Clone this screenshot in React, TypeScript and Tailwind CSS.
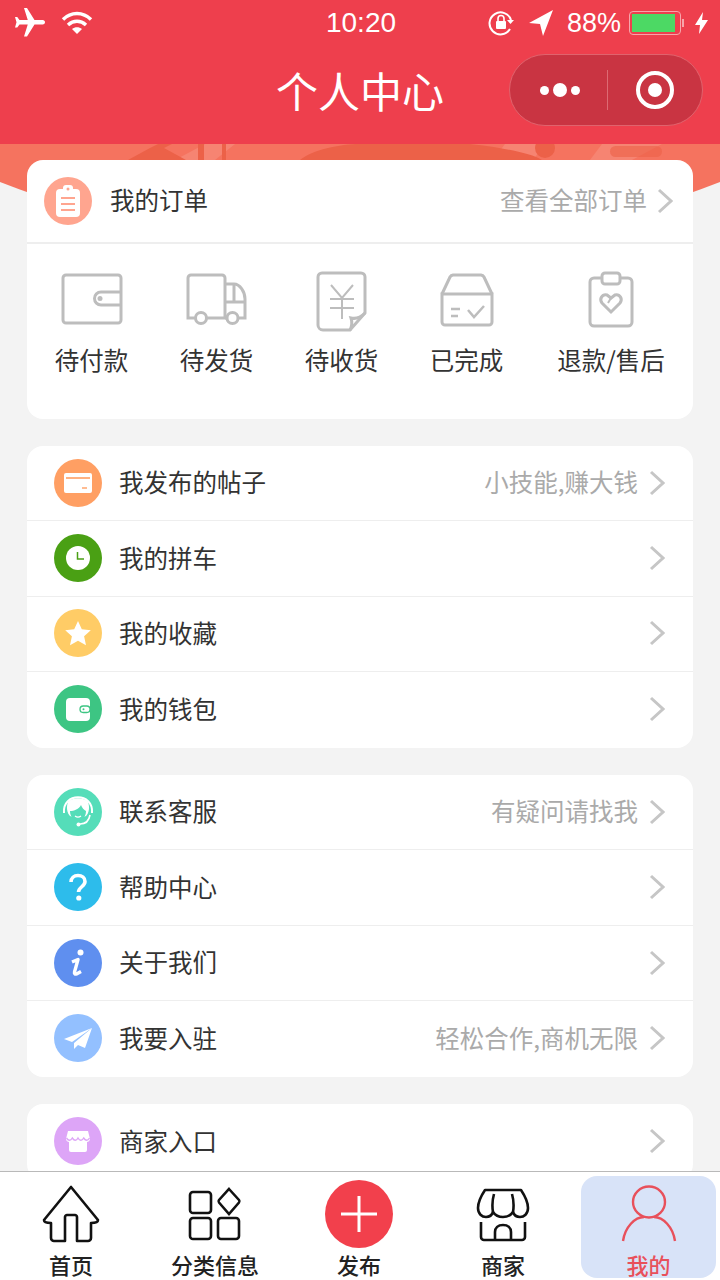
import type { ReactNode } from 'react'

const FONT = "font-['Noto_Sans_CJK_SC','Liberation_Sans',sans-serif]"

function Chevron() {
  return (
    <svg width="16" height="26" viewBox="0 0 16 26" fill="none" className="shrink-0">
      <path d="M2 2l12 11L2 24" stroke="#c6c6c6" strokeWidth="3" />
    </svg>
  )
}

function Circle({ color, children }: { color: string; children: ReactNode }) {
  return (
    <span className={`flex h-[48px] w-[48px] shrink-0 items-center justify-center rounded-full ${color}`}>
      <svg width="48" height="48" viewBox="0 0 48 48" fill="none">{children}</svg>
    </span>
  )
}

const CardIcon = (
  <>
    <rect x="10" y="14" width="28" height="20" rx="2" fill="#fff" />
    <path d="M12 19h24" stroke="#ff9f63" strokeWidth="1.6" />
    <path d="M28 29h5" stroke="#ff9f63" strokeWidth="1.4" />
  </>
)
const ClockIcon = (
  <>
    <circle cx="24" cy="24" r="12" fill="#fff" />
    <path d="M23.5 18v7h6.500" stroke="#4aa014" strokeWidth="1.500" />
  </>
)
const StarIcon = (
  <path d="M24 12l3.800 8.300 9 1-6.700 6 1.900 9L24 31.800 16 36.300l1.900-9-6.700-6 9-1z" fill="#fff" />
)
const WalletIcon = (
  <>
    <rect x="12" y="13" width="24" height="23" rx="4" fill="#fff" />
    <rect x="26" y="21" width="10" height="6.500" rx="3.200" fill="#fff" stroke="#3dc583" strokeWidth="1.300" />
    <circle cx="29.500" cy="24.200" r="1" fill="#3dc583" />
  </>
)
const HeadsetIcon = (
  <>
    <path d="M10 25C8 4 40 4 38 25" stroke="#fff" strokeWidth="2" />
    <path d="M14 14c4-5 16-5 20 0 2 5 1 11-2 14l-8 3-8-3c-3-3-4-9-2-14z" fill="#fff" />
    <path d="M16 23c4 0 9-2 11-6 1 3 3 5 5 6 0 6-4 10-8 10s-8-4-8-10z" fill="#55ddb9" />
    <path d="M36 27c-1 6-5 9-10 9" stroke="#fff" strokeWidth="1.600" />
    <circle cx="24.500" cy="36.500" r="2" fill="#fff" />
    <path d="M21 28c2 1.500 4 1.500 6 0" stroke="#fff" strokeWidth="1.300" />
  </>
)
const QuestionIcon = (
  <>
    <path d="M17 19c0-4 3-6.500 7-6.500s7 2.500 7 6c0 5-6.500 5.500-6.500 10.500" stroke="#fff" strokeWidth="3.600" />
    <circle cx="24.800" cy="35" r="2.600" fill="#fff" />
  </>
)
const InfoIcon = (
  <>
    <circle cx="26.500" cy="13.500" r="3" fill="#fff" />
    <path d="M18 23l6-2.500-3.500 12.500c-.4 1.500.6 2.500 2 2l4.500-2.500" stroke="#fff" strokeWidth="3.400" strokeLinejoin="round" />
  </>
)
const PlaneIcon = (
  <>
    <path d="M38 14L10 25l8 3z" fill="#fff" />
    <path d="M38 14L20 29v6l4-4 7 3z" fill="#fff" />
  </>
)
const StoreIcon = (
  <>
    <path d="M14 14h20l2 8c0 2-2 3-3 3v8a2 2 0 0 1-2 2H17a2 2 0 0 1-2-2v-8c-1 0-3-1-3-3z" fill="#fff" />
    <path d="M12.500 21c2 3 4 3 5.800 0 2 3 4 3 5.700 0 1.800 3 3.800 3 5.700 0 2 3 4 3 5.800 0" stroke="#dda5f7" strokeWidth="1.400" />
  </>
)

const groups = [
  [
    { label: '我发布的帖子', hint: '小技能,赚大钱', color: 'bg-[#ff9f63]', icon: CardIcon },
    { label: '我的拼车', color: 'bg-[#4aa014]', icon: ClockIcon },
    { label: '我的收藏', color: 'bg-[#ffcc66]', icon: StarIcon },
    { label: '我的钱包', color: 'bg-[#3dc583]', icon: WalletIcon },
  ],
  [
    { label: '联系客服', hint: '有疑问请找我', color: 'bg-[#55ddb9]', icon: HeadsetIcon },
    { label: '帮助中心', color: 'bg-[#2dbceb]', icon: QuestionIcon },
    { label: '关于我们', color: 'bg-[#5f8fef]', icon: InfoIcon },
    { label: '我要入驻', hint: '轻松合作,商机无限', color: 'bg-[#93c0ff]', icon: PlaneIcon },
  ],
  [{ label: '商家入口', color: 'bg-[#dda5f7]', icon: StoreIcon }],
]

const GRAY = { stroke: '#bdbdbd', strokeWidth: 3 }

const orderItems: { label: string; icon: ReactNode }[] = [
  {
    label: '待付款',
    icon: (
      <svg width="62" height="56" viewBox="0 0 62 56" fill="none" {...GRAY}>
        <rect x="2" y="3" width="58" height="48" rx="3" />
        <path d="M60 20H40a6.500 6.500 0 0 0 0 13h20" />
        <circle cx="39" cy="26.500" r="2.500" fill="#bdbdbd" stroke="none" />
      </svg>
    ),
  },
  {
    label: '待发货',
    icon: (
      <svg width="62" height="56" viewBox="0 0 62 56" fill="none" {...GRAY}>
        <path d="M9 46H2V6a3 3 0 0 1 3-3h31a3 3 0 0 1 3 3v40H21" />
        <path d="M39 12h9c6 0 11 8 11 15v19h-7M39 46h2" />
        <path d="M39 30h20M48 12v18" />
        <circle cx="15" cy="46" r="5.500" />
        <circle cx="46.500" cy="46" r="5.500" />
      </svg>
    ),
  },
  {
    label: '待收货',
    icon: (
      <svg width="52" height="62" viewBox="0 0 52 62" fill="none" className="mt-[4px]" {...GRAY}>
        <path d="M34 59H7a5 5 0 0 1-5-5V6a4 4 0 0 1 4-4h39a4 4 0 0 1 4 4v36z" />
        <path d="M34 59c2-4 2-9 1-12 4 1 9 0 14-5" />
        <path d="M15 14l11 13 11-13M14 28h24M14 37h24M26 27v21" strokeWidth="2" />
      </svg>
    ),
  },
  {
    label: '已完成',
    icon: (
      <svg width="54" height="56" viewBox="0 0 54 56" fill="none" {...GRAY}>
        <path d="M2 22L10 5a4 4 0 0 1 3-2h28a4 4 0 0 1 3 2l8 17" />
        <path d="M2 22h50v28a3 3 0 0 1-3 3H5a3 3 0 0 1-3-3z" />
        <path d="M11 37h9M11 44h7" strokeWidth="2.500" />
        <path d="M28 38l6 7 10-11" strokeWidth="2.500" />
      </svg>
    ),
  },
  {
    label: '退款/售后',
    icon: (
      <svg width="46" height="58" viewBox="0 0 46 58" fill="none" {...GRAY}>
        <path d="M14 7H6a4 4 0 0 0-4 4v40a4 4 0 0 0 4 4h34a4 4 0 0 0 4-4V11a4 4 0 0 0-4-4h-8" />
        <rect x="14" y="2" width="18" height="11" rx="3" />
        <path d="M23 41l-9-9c-3-4 0-9 5-8l4 3 4-3c5-1 8 4 5 8z" />
        <path d="M23 27l-3 5" strokeWidth="2" />
      </svg>
    ),
  },
]

const tabs: { label: string; icon: ReactNode; active?: boolean }[] = [
  {
    label: '首页',
    icon: (
      <svg width="58" height="60" viewBox="0 0 58 60" fill="none" stroke="#111" strokeWidth="2.600" strokeLinejoin="round">
        <path d="M29 3L2 36c0 2 2 3 7 3v15a3 3 0 0 0 3 3h11V33c0-1 1-2 2-2h8c1 0 2 1 2 2v24h11a3 3 0 0 0 3-3V39c5 0 7-1 7-3z" />
      </svg>
    ),
  },
  {
    label: '分类信息',
    icon: (
      <svg width="54" height="54" viewBox="0 0 54 54" fill="none" stroke="#111" strokeWidth="2.600">
        <rect x="2" y="5" width="21" height="21" rx="3" />
        <path d="M41 2l10 11a2 2 0 0 1 0 2.500L41 27 31 15.500a2 2 0 0 1 0-2.500z" />
        <rect x="2" y="31" width="21" height="21" rx="3" />
        <rect x="30" y="31" width="21" height="21" rx="3" />
      </svg>
    ),
  },
  {
    label: '发布',
    icon: (
      <span className="flex h-[68px] w-[68px] items-center justify-center rounded-full bg-[#f2404c]">
        <svg width="38" height="38" viewBox="0 0 38 38" stroke="#fff" strokeWidth="3">
          <path d="M1 19h36M19 1v36" />
        </svg>
      </span>
    ),
  },
  {
    label: '商家',
    icon: (
      <svg width="54" height="56" viewBox="0 0 54 56" fill="none" stroke="#111" strokeWidth="2.600" strokeLinejoin="round">
        <path d="M9 4h36c4 6 7 11 7 18 0 6-4 9-8 9s-6-2-7-5c-2 3-5 5-10 5s-8-2-10-5c-1 3-3 5-7 5s-8-3-8-9C2 15 5 10 9 4z" />
        <path d="M17 26c-1-6-1-11 1-18M37 26c1-6 1-11-1-18" />
        <path d="M5 36v15a3 3 0 0 0 3 3h38a3 3 0 0 0 3-3V36" />
        <path d="M19 53v-7c0-4 3-7 8-7s8 3 8 7v7" />
      </svg>
    ),
  },
  {
    label: '我的',
    active: true,
    icon: (
      <svg width="56" height="58" viewBox="0 0 56 58" fill="none" stroke="#e8505b" strokeWidth="2.400">
        <ellipse cx="28" cy="17" rx="16" ry="15.500" />
        <path d="M2 56c2-14 12-24 21-24M54 56c-2-14-12-24-21-24" />
      </svg>
    ),
  },
]

function MenuRow({ item, last }: { item: (typeof groups)[number][number]; last: boolean }) {
  return (
    <div className={`flex h-[75.400px] items-center pb-[1px] pl-[27px] pr-[28px] ${last ? '' : 'border-b-[1.500px] border-[#eeeeee]'}`}>
      <Circle color={item.color}>{item.icon}</Circle>
      <span className="ml-[17px] flex-1 text-[24.500px] text-[#333]">{item.label}</span>
      {'hint' in item && item.hint && <span className="mr-[11px] text-[24.500px] text-[#aaa]">{item.hint}</span>}
      <Chevron />
    </div>
  )
}

export default function App() {
  return (
    <div className={`flex h-[1280px] w-[720px] flex-col overflow-hidden bg-[#f3f3f3] ${FONT}`}>
      <header className="h-[144px] shrink-0 bg-[#ee3f4d] text-white">
        <div className="grid h-[46px] grid-cols-3 items-center px-[12px]">
          <div className="flex items-center gap-[13px]">
            <svg width="36" height="36" viewBox="0 0 24 24" fill="#fff" className="rotate-90">
              <path d="M21 16v-2l-8-5V3.500c0-.83-.67-1.500-1.500-1.500S10 2.670 10 3.500V9l-8 5v2l8-2.500V19l-2 1.500V22l3.500-1 3.500 1v-1.500L13 19v-5.500l8 2.500z" />
            </svg>
            <svg width="32" height="24" viewBox="0 0 32 24" fill="none" stroke="#fff" strokeWidth="3.400">
              <path d="M2 8.500c8-8 20-8 28 0M7 14c5.500-5 12.500-5 18 0" />
              <path d="M16 23l-5-5c3-2.500 7-2.500 10 0z" fill="#fff" stroke="none" />
            </svg>
          </div>
          <div className="pl-[2px] text-center font-['Liberation_Sans'] text-[28px] leading-none">10:20</div>
          <div className="flex items-center justify-end">
            <svg width="26" height="28" viewBox="0 0 26 28" fill="none" stroke="#fff" strokeWidth="2" className="mr-[15px]">
              <path d="M22 20a11 11 0 1 1 1-9" />
              <path d="M19 11h7l-3.500 4z" fill="#fff" stroke="none" />
              <rect x="8" y="12" width="10" height="8" rx="1" fill="#fff" stroke="none" />
              <path d="M10 12V9.500a3 3 0 0 1 6 0V12" strokeWidth="1.600" />
            </svg>
            <svg width="24" height="26" viewBox="0 0 24 26" fill="#fff" className="mr-[14px]">
              <path d="M24 0L0 13l11 1 3 12z" />
            </svg>
            <span className="mr-[8px] font-['Liberation_Sans'] text-[27px] leading-none">88%</span>
            <span className="flex h-[24px] w-[52px] rounded-[4px] border-[1.500px] border-[#f7a5ab] p-[2px]">
              <span className="w-[43px] bg-[#4cd964]" />
            </span>
            <span className="ml-[1px] mr-[11px] h-[8px] w-[2px] bg-[#f7a5ab]" />
            <svg width="13" height="22" viewBox="0 0 13 22" fill="#fff">
              <path d="M8 0L0 13h5l-1 9 9-14H7z" />
            </svg>
          </div>
        </div>
        <div className="relative flex h-[90px] items-center justify-center pb-[2px]">
          <h1 className="text-[42px] font-normal leading-none">个人中心</h1>
          <div className="absolute right-[17px] top-[8px] flex h-[72px] w-[194px] items-center rounded-full border border-[#e0636d] bg-[#c93442]">
            <div className="flex w-[97px] items-center justify-center gap-[4px] pl-[3px]">
              <span className="h-[9px] w-[9px] rounded-full bg-white" />
              <span className="h-[14px] w-[14px] rounded-full bg-white" />
              <span className="h-[9px] w-[9px] rounded-full bg-white" />
            </div>
            <span className="h-[40px] w-px bg-[#dd6a73]" />
            <div className="flex flex-1 items-center justify-center">
              <span className="flex h-[38px] w-[38px] items-center justify-center rounded-full border-[4px] border-white">
                <span className="h-[14px] w-[14px] rounded-full bg-white" />
              </span>
            </div>
          </div>
        </div>
      </header>

      <main className="min-h-0 flex-1 overflow-hidden">
        {/* decorative skyline behind the first card */}
        <svg width="720" height="52" viewBox="0 0 720 52" className="block">
          <path d="M0 0h720v38q-180 70-360 70T0 38z" fill="#f5735f" />
          <path d="M175 16L205 0h30l-20 16zM505 0h40l-12 16h-40zM590 16l12-16h60l-30 16z" fill="#f68472" />
          <path d="M128 16l22-12 8-4h14l-8 4 22 12zM198 0h6v16h-6zM222 0h4v16h-4zM300 16c12-10 40-16 60-16h110c20 2 60 8 72 16z" fill="#ec6148" />
          <circle cx="545" cy="4" r="10" fill="#ec6148" />
          <rect x="610" y="2" width="52" height="11" rx="5.500" fill="#ec6148" opacity=".6" />
        </svg>
        <div className="relative -mt-[36px] flex flex-col gap-[27.500px] px-[27px]">
          <section className="rounded-[16px] bg-white">
            <div className="flex h-[84px] items-center border-b-2 border-[#eeeeee] pb-[1px] pl-[17px] pr-[20px]">
              <span className="flex h-[48px] w-[48px] shrink-0 items-center justify-center rounded-full bg-[#ffa58f]">
                <svg width="26" height="32" viewBox="0 0 26 32">
                  <rect x="1" y="4" width="24" height="28" rx="4" fill="#fff" />
                  <rect x="8" y="0" width="10" height="8" rx="3" fill="#fff" />
                  <path d="M6 13h14M6 19h14M6 25h14" stroke="#ffa58f" strokeWidth="1.800" />
                  <circle cx="13" cy="4" r="1.500" fill="#ffa58f" />
                </svg>
              </span>
              <span className="ml-[18px] flex-1 text-[24.500px] text-[#333]">我的订单</span>
              <span className="mr-[10px] text-[24.500px] text-[#aaa]">查看全部订单</span>
              <Chevron />
            </div>
            <div className="grid h-[174.500px] grid-cols-[125px_125px_125px_125px_1fr] pl-[2px] pt-[27px]">
              {orderItems.map((item) => (
                <div key={item.label} className="flex flex-col items-center">
                  <div className="flex h-[58px] items-center justify-center">{item.icon}</div>
                  <span className="mt-[13px] text-[24.500px] leading-[36px] text-[#333]">{item.label}</span>
                </div>
              ))}
            </div>
          </section>
          {groups.map((rows) => (
            <section key={rows[0].label} className="rounded-[16px] bg-white">
              {rows.map((row, i) => (
                <MenuRow key={row.label} item={row} last={i === rows.length - 1} />
              ))}
            </section>
          ))}
        </div>
      </main>

      <nav className="grid h-[109px] shrink-0 grid-cols-5 border-t border-[#b9b9b9] bg-white">
        {tabs.map((tab) => (
          <div
            key={tab.label}
            className={`mb-[2px] mt-[4px] flex flex-col items-center rounded-[16px] ${tab.active ? 'ml-[5px] mr-[4px] bg-[#d8e3f8]' : 'ml-[3px] mr-[5px]'}`}
          >
            <div className="flex h-[75px] items-center justify-center">{tab.icon}</div>
            <span className={`text-[22px] font-medium leading-[26px] ${tab.active ? 'text-[#e8505b]' : 'text-[#222]'}`}>
              {tab.label}
            </span>
          </div>
        ))}
      </nav>
    </div>
  )
}
